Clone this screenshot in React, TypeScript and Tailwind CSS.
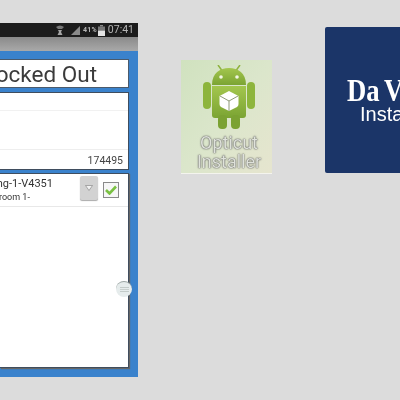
const sans = "font-['Roboto','Liberation_Sans',sans-serif]";

const StatusBar = () => (
  <div className="h-[14px] bg-[#1c1c1c] flex items-center justify-end pr-[4px] text-[#b5b5b5]">
    <svg width="8" height="10" viewBox="0 0 8 10" className="mr-[7px]">
      <path d="M0 2 Q4 -1 8 2 L6 4 L2 4 Z" fill="#777" />
      <path d="M2 5 H6 L5 7 L6.5 10 H1.5 L3 7 Z" fill="#a5a5a5" />
    </svg>
    <svg width="9" height="9" viewBox="0 0 9 9" className="mr-[3px]">
      <path d="M0 9 L9 0 V9 Z" fill="#8a8a8a" />
    </svg>
    <span className={`${sans} text-[7px] font-bold leading-none mr-[1px] tracking-[0.2px]`}>41%</span>
    <svg width="7" height="11" viewBox="0 0 7 11" className="mr-[3px]">
      <rect x="2" y="0" width="3" height="1.5" fill="#888" />
      <rect x="0" y="1.5" width="7" height="4" fill="#777" />
      <rect x="0" y="5.5" width="7" height="5.5" fill="#e4e4e4" />
    </svg>
    <span className={`${sans} text-[10.5px] leading-none`}>07:41</span>
  </div>
);

const Phone = () => (
  <div className="w-[138px] h-[354px] mt-[23px] flex flex-col shrink-0">
    <StatusBar />
    <div className="h-[14px] bg-gradient-to-b from-[#8a8a8a] to-[#a9a9a9]" />
    <div className="flex-1 bg-[#3a82cc] pt-[8px] pr-[9px] pb-[9px] flex flex-col">
      <div className="h-[29px] bg-white border-y border-r border-[#4b5a6b] flex justify-end items-center overflow-hidden pr-[31px] pt-[2px]">
        <span className={`${sans} text-[22.5px] leading-none text-[#3b3b3b] whitespace-nowrap`}>Locked Out</span>
      </div>
      <div className="h-[78px] mt-[4px] bg-white border-y border-r border-[#3f4d5e] flex flex-col">
        <div className="h-[18px] border-b border-[#f1f1f1]" />
        <div className="h-[39px] border-b border-[#eeeeee]" />
        <div className={`${sans} flex-1 flex items-center justify-end pt-[3px] pr-[5px] text-[10.5px] text-[#444]`}>174495</div>
      </div>
      <div className="flex-1 mt-[3px] bg-white border-y border-r border-[#3f4d5e] shadow-[1px_1px_1px_#666] flex flex-col">
        <div className="h-[33px] border-b border-[#e8e8e8] flex items-start">
          <div className={`${sans} w-[53px] mt-[3px] text-[#333] overflow-hidden`}>
            <div className="flex justify-end whitespace-nowrap text-[11px] leading-[14px]">Building-1-V4351</div>
            <div className="flex justify-start whitespace-nowrap text-[9px] leading-[12px] -ml-[1px]">room 1-</div>
          </div>
          <div className="w-[18px] h-[24px] mt-[2px] ml-[27px] rounded-[2px] bg-[#d2d2d2] shadow-[0_1px_1px_#aaa] flex items-center justify-center">
            <svg width="8" height="6" viewBox="0 0 8 6">
              <path d="M0.5 0.5 H7.5 L4 5.5 Z" fill="#f2f2f2" stroke="#8b8b8b" strokeWidth="0.7" />
            </svg>
          </div>
          <div className="w-[16px] h-[16px] mt-[8px] ml-[5px] bg-[#f7f7f7] border border-[#8a8a8a] flex items-center justify-center">
            <svg width="12" height="10" viewBox="0 0 12 10">
              <path d="M1 5 L4.5 8.5 L11 1.5" fill="none" stroke="#7ac143" strokeWidth="2.6" />
            </svg>
          </div>
        </div>
      </div>
    </div>
  </div>
);

const Android = () => (
  <svg width="52" height="64" viewBox="0 0 52 64">
    <defs>
      <linearGradient id="droid" x1="0" y1="0" x2="0" y2="1">
        <stop offset="0" stopColor="#a3c64e" />
        <stop offset="1" stopColor="#7ba433" />
      </linearGradient>
    </defs>
    <path d="M15 0 L20 7 M37 0 L32 7" stroke="#8fb23f" strokeWidth="1.5" />
    <path d="M9 20 C9 8 17 3 26 3 C35 3 43 8 43 20 Z" fill="url(#droid)" />
    <circle cx="18" cy="12" r="1.8" fill="#f2f5e4" />
    <circle cx="34" cy="12" r="1.8" fill="#f2f5e4" />
    <path d="M9 21 H43 V50 Q43 53 40 53 H12 Q9 53 9 50 Z" fill="url(#droid)" />
    <rect x="0" y="17" width="8" height="27" rx="4" fill="#8db53c" />
    <rect x="44" y="17" width="8" height="27" rx="4" fill="#8db53c" />
    <rect x="15" y="50" width="9" height="14" rx="4" fill="#7ba233" />
    <rect x="28" y="50" width="9" height="14" rx="4" fill="#7ba233" />
    <path d="M26 26 L35.5 31 V39 Q35.5 41 34 42 L26 46 L18 42 Q16.5 41 16.5 39 V31 Z" fill="#ffffff" />
    <path d="M17 31 L26 36 L35 31 M26 36 V46" fill="none" stroke="#8f9a78" strokeWidth="1" />
  </svg>
);

const OpticutCard = () => (
  <div className="w-[91px] h-[114px] mt-[60px] ml-[43px] shrink-0 bg-gradient-to-br from-[#d0e2bf] via-[#dbe6cb] to-[#e6e5cf] border-b border-[#f4f4ee] flex flex-col items-center pt-[5px] pl-[5px]">
    <Android />
    <div className={`${sans} text-[18px] leading-[19px] mt-[4px] text-center text-[#dfe2db] [text-shadow:0_0_1px_#444,0_0_2px_#666]`}>
      <div>Opticut</div>
      <div>Installer</div>
    </div>
  </div>
);

const DaVinciCard = () => (
  <div className="w-[150px] h-[146px] mt-[27px] ml-[53px] shrink-0 rounded-[2px] bg-[#1b3568] flex flex-col justify-center text-white">
    <div className="font-['Liberation_Serif',serif] font-bold text-[31px] leading-[27px] whitespace-nowrap ml-[22px] origin-left scale-x-[0.86] [word-spacing:-2px]">Da Vinci</div>
    <div className="font-['Liberation_Sans',sans-serif] text-[20px] leading-[20px] whitespace-nowrap pl-[35px]">Installer</div>
  </div>
);

export default function App() {
  return (
    <div className="relative w-[400px] h-[400px] overflow-hidden bg-[#dcdcdc] flex items-start blur-[0.4px]">
      <Phone />
      <OpticutCard />
      <DaVinciCard />
      <div className="absolute left-[116px] top-[281px] w-[16px] h-[16px] rounded-full bg-[#e6ecec] border-t border-[#9aa5a3] flex flex-col items-center justify-center gap-[1px]">
        <div className="w-[9px] h-px bg-[#c3cbc9]" />
        <div className="w-[9px] h-px bg-[#c9d0ce]" />
        <div className="w-[9px] h-px bg-[#c3cbc9]" />
      </div>
    </div>
  );
}
